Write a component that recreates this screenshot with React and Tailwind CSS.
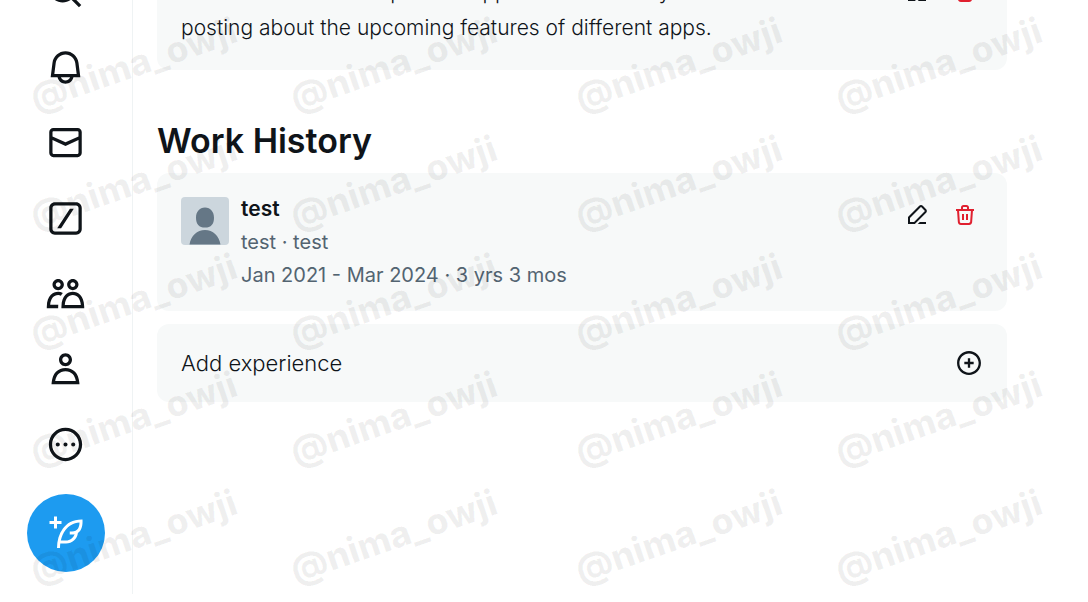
import React from 'react';

const ICONS = {
  search:
    'M10.25 3.75c-3.59 0-6.5 2.91-6.5 6.5s2.91 6.5 6.5 6.5c1.795 0 3.419-.726 4.596-1.904 1.178-1.177 1.904-2.801 1.904-4.596 0-3.59-2.91-6.5-6.5-6.5zm-8.5 6.5c0-4.694 3.806-8.5 8.5-8.5s8.5 3.806 8.5 8.5c0 1.986-.682 3.815-1.824 5.262l4.781 4.781-1.414 1.414-4.781-4.781c-1.447 1.142-3.276 1.824-5.262 1.824-4.694 0-8.5-3.806-8.5-8.5z',
  bell:
    'M19.993 9.042C19.48 5.017 16.054 2 11.996 2s-7.49 3.021-7.999 7.051L2.866 18H7.1c.463 2.282 2.481 4 4.9 4s4.437-1.718 4.9-4h4.236l-1.143-8.958zM12 20c-1.306 0-2.417-.835-2.829-2h5.658c-.412 1.165-1.523 2-2.829 2zm-6.866-4l.847-6.698C6.364 6.272 8.941 4 11.996 4s5.627 2.268 6.013 5.295L18.864 16H5.134z',
  mail:
    'M1.998 5.5c0-1.381 1.119-2.5 2.5-2.5h15c1.381 0 2.5 1.119 2.5 2.5v13c0 1.381-1.119 2.5-2.5 2.5h-15c-1.381 0-2.5-1.119-2.5-2.5v-13zm2.5-.5c-.276 0-.5.224-.5.5v2.764l8 3.638 8-3.636V5.5c0-.276-.224-.5-.5-.5h-15zm15.5 5.463l-8 3.636-8-3.638V18.5c0 .276.224.5.5.5h15c.276 0 .5-.224.5-.5v-8.037z',
  slash:
    'M5.5 2h13C20.43 2 22 3.57 22 5.5v13c0 1.93-1.57 3.5-3.5 3.5h-13C3.57 22 2 20.43 2 18.5v-13C2 3.57 3.57 2 5.5 2zm0 2C4.67 4 4 4.67 4 5.5v13c0 .83.67 1.5 1.5 1.5h13c.83 0 1.5-.67 1.5-1.5v-13c0-.83-.67-1.5-1.5-1.5h-13zM6.9 18l7.8-12h2.4L9.3 18H6.9z',
  communities:
    'M7.501 19.917L7.471 21H.472l.029-1.027c.184-6.618 3.736-8.977 7-8.977.963 0 1.95.212 2.87.672-.444.478-.851 1.03-1.212 1.656-.507-.204-1.054-.329-1.658-.329-2.767 0-4.57 2.223-4.938 6.004H7.56c-.023.302-.05.599-.059.918zm15.998.056L23.528 21H9.472l.029-1.027c.184-6.618 3.736-8.977 7-8.977s6.816 2.358 7 8.977zM21.437 19c-.367-3.781-2.17-6.004-4.938-6.004s-4.57 2.223-4.938 6.004h9.875zm-4.938-9c-.799 0-1.527-.279-2.116-.73-.836-.64-1.384-1.638-1.384-2.77 0-1.93 1.567-3.5 3.5-3.5s3.5 1.57 3.5 3.5c0 1.132-.548 2.13-1.384 2.77-.589.451-1.317.73-2.116.73zm-1.5-3.5c0 .827.673 1.5 1.5 1.5s1.5-.673 1.5-1.5-.673-1.5-1.5-1.5-1.5.673-1.5 1.5zM7.5 3C9.433 3 11 4.57 11 6.5S9.433 10 7.5 10 4 8.43 4 6.5 5.567 3 7.5 3zm0 2C6.673 5 6 5.673 6 6.5S6.673 8 7.5 8 9 7.327 9 6.5 8.327 5 7.5 5z',
  profile:
    'M5.651 19h12.698c-.337-1.8-1.023-3.21-1.945-4.19C15.318 13.65 13.838 13 12 13s-3.317.65-4.404 1.81c-.922.98-1.608 2.39-1.945 4.19zm.486-5.56C7.627 11.85 9.648 11 12 11s4.373.85 5.863 2.44c1.477 1.58 2.366 3.8 2.632 6.46l.11 1.1H3.395l.11-1.1c.266-2.66 1.155-4.88 2.632-6.46zM12 4c-1.105 0-2 .9-2 2s.895 2 2 2 2-.9 2-2-.895-2-2-2zM8 6c0-2.21 1.791-4 4-4s4 1.79 4 4-1.791 4-4 4-4-1.79-4-4z',
  more:
    'M3.75 12c0-4.56 3.69-8.25 8.25-8.25s8.25 3.69 8.25 8.25-3.69 8.25-8.25 8.25S3.75 16.56 3.75 12zM12 1.75C6.34 1.75 1.75 6.34 1.75 12S6.34 22.25 12 22.25 22.25 17.66 22.25 12 17.66 1.75 12 1.75zm-4.75 11.5c.69 0 1.25-.56 1.25-1.25s-.56-1.25-1.25-1.25S6 11.31 6 12s.56 1.25 1.25 1.25zm9.5 0c.69 0 1.25-.56 1.25-1.25s-.56-1.25-1.25-1.25-1.25.56-1.25 1.25.56 1.25 1.25 1.25zM13.25 12c0 .69-.56 1.25-1.25 1.25s-1.25-.56-1.25-1.25.56-1.25 1.25-1.25 1.25.56 1.25 1.25z',
  compose:
    'M23 3c-6.62-.1-10.38 2.421-13.05 6.03C7.29 12.61 6 17.331 6 22h2c0-1.007.07-2.012.19-3H12c4.1 0 7.48-3.082 7.94-7.054C22.79 10.147 23.17 6.359 23 3zm-7 8h-1.5v2H16c.63-.016 1.2-.08 1.72-.188C16.95 15.24 14.68 17 12 17H8.55c.57-2.512 1.57-4.851 3-6.78 2.16-2.912 5.29-4.911 9.45-5.187C20.95 8.079 19.9 11 16 11zM4 9V6H1V4h3V1h2v3h3v2H6v3H4z',
  edit:
    'M14.23 2.854c.98-.977 2.56-.977 3.54 0l3.38 3.378c.97.977.97 2.559 0 3.536L9.91 21H3v-6.914L14.23 2.854zm2.12 1.414c-.19-.195-.51-.195-.7 0L5 14.914V19h4.09L19.73 8.354c.2-.196.2-.512 0-.708l-3.38-3.378zM14.75 19l-2 2H21v-2h-6.25z',
  trash:
    'M16 6V4.5C16 3.12 14.88 2 13.5 2h-3C9.11 2 8 3.12 8 4.5V6H3v2h1.06l.81 11.21C4.98 20.78 6.28 22 7.86 22h8.27c1.58 0 2.88-1.22 3-2.79L19.93 8H21V6h-5zm-6-1.5c0-.28.22-.5.5-.5h3c.27 0 .5.22.5.5V6h-4V4.5zm7.13 14.57c-.04.52-.47.93-1 .93H7.86c-.53 0-.96-.41-1-.93L6.07 8h11.85l-.79 11.07zM9 17v-6h2v6H9zm4 0v-6h2v6h-2z',
  add:
    'M12 3.75c-4.56 0-8.25 3.69-8.25 8.25s3.69 8.25 8.25 8.25 8.25-3.69 8.25-8.25S16.56 3.75 12 3.75zM1.75 12C1.75 6.34 6.34 1.75 12 1.75S22.25 6.34 22.25 12 17.66 22.25 12 22.25 1.75 17.66 1.75 12zM11 11V8h2v3h3v2h-3v3h-2v-3H8v-2h3z',
};

const Icon = ({ name, className }) => (
  <svg viewBox="0 0 24 24" fill="currentColor" aria-hidden="true" className={className}>
    <path d={ICONS[name]} />
  </svg>
);

const NAV_ITEMS = [
  { icon: 'search', label: 'Explore' },
  { icon: 'bell', label: 'Notifications' },
  { icon: 'mail', label: 'Messages' },
  { icon: 'slash', label: 'Grok' },
  { icon: 'communities', label: 'Communities' },
  { icon: 'profile', label: 'Profile' },
  { icon: 'more', label: 'More' },
];

const Sidebar = () => (
  <header className="flex w-[133px] shrink-0 flex-col items-center border-r border-[#eff3f4]">
    {/* first item is scrolled half out of view */}
    <nav className="-mt-7 flex h-[492px] flex-col justify-between pr-px">
      {NAV_ITEMS.map((item) => (
        <a key={item.icon} href="#" aria-label={item.label}>
          <Icon name={item.icon} className="size-[39px]" />
        </a>
      ))}
    </nav>
    <button
      type="button"
      aria-label="Post"
      className="mt-[30px] flex size-[78px] items-center justify-center rounded-full bg-[#1d9bf0] text-white"
    >
      <Icon name="compose" className="size-9" />
    </button>
  </header>
);

const CardActions = () => (
  <div className="flex shrink-0 gap-3">
    <button type="button" aria-label="Edit" className="size-9 p-1.5">
      <Icon name="edit" className="size-6" />
    </button>
    <button type="button" aria-label="Delete" className="size-9 p-1.5 text-[#e0202f]">
      <Icon name="trash" className="size-6" />
    </button>
  </div>
);

const Avatar = () => (
  <svg viewBox="0 0 48 48" className="size-12 shrink-0 rounded" aria-hidden="true">
    <rect width="48" height="48" fill="#ccd6dd" />
    <path
      fill="#657786"
      d="M24 10.5c5.6 0 9 4.3 9 10.2 0 6.6-3 9.8-9 9.8s-9-3.2-9-9.8c0-5.9 3.4-10.2 9-10.2zM8.5 47.5C10 38.5 16 33 24 33s14 5.5 15.5 14.5z"
    />
  </svg>
);

const Watermark = () => (
  <div
    aria-hidden="true"
    className="pointer-events-none absolute inset-0 flex flex-col overflow-hidden text-4xl font-extrabold text-black/6"
  >
    {[0, 1, 2, 3, 4].map((row) => (
      <div key={row} className="flex h-[118px] shrink-0 items-end gap-[285px] pl-[38px]">
        {[0, 1].map((pair) => (
          <div key={pair} className="flex w-[260px] shrink-0 gap-[260px]">
            <span className="w-0 origin-bottom-left -rotate-19 whitespace-nowrap">@nima_owji</span>
            <span className="w-0 origin-bottom-left -rotate-19 whitespace-nowrap">@nima_owji</span>
          </div>
        ))}
      </div>
    ))}
  </div>
);

const App = () => {
  return (
    <div className="relative flex h-screen overflow-hidden bg-white pb-2 font-['Inter',sans-serif] text-[#0f1419]">
      <Sidebar />

      <main className="-mt-[50px] flex-1 pr-[81px] pl-6">
        <section className="flex items-start justify-between rounded-xl bg-[#f7f9f9] p-6">
          <p className="text-[21px] leading-9 font-light">
            I'm a software developer and app researcher daily
            <br />
            posting about the upcoming features of different apps.
          </p>
          <CardActions />
        </section>

        <h2 className="mt-12 mb-2.5 text-[34px] leading-[45px] font-semibold">Work History</h2>

        <section className="flex items-start gap-3 rounded-xl bg-[#f7f9f9] p-6">
          <Avatar />
          <div className="flex flex-1 flex-col gap-[9px] text-xl leading-6 text-[#536471]">
            <h3 className="text-[21px] leading-6 font-semibold text-[#0f1419]">test</h3>
            <p>test · test</p>
            <p>Jan 2021 - Mar 2024 · 3 yrs 3 mos</p>
          </div>
          <CardActions />
        </section>

        <button
          type="button"
          className="mt-[13px] flex w-full items-center justify-between rounded-xl bg-[#f7f9f9] px-6 py-[25px] text-[22px] leading-7 font-light"
        >
          Add experience
          <Icon name="add" className="size-7" />
        </button>
      </main>

      <Watermark />
    </div>
  );
};

export default App;
